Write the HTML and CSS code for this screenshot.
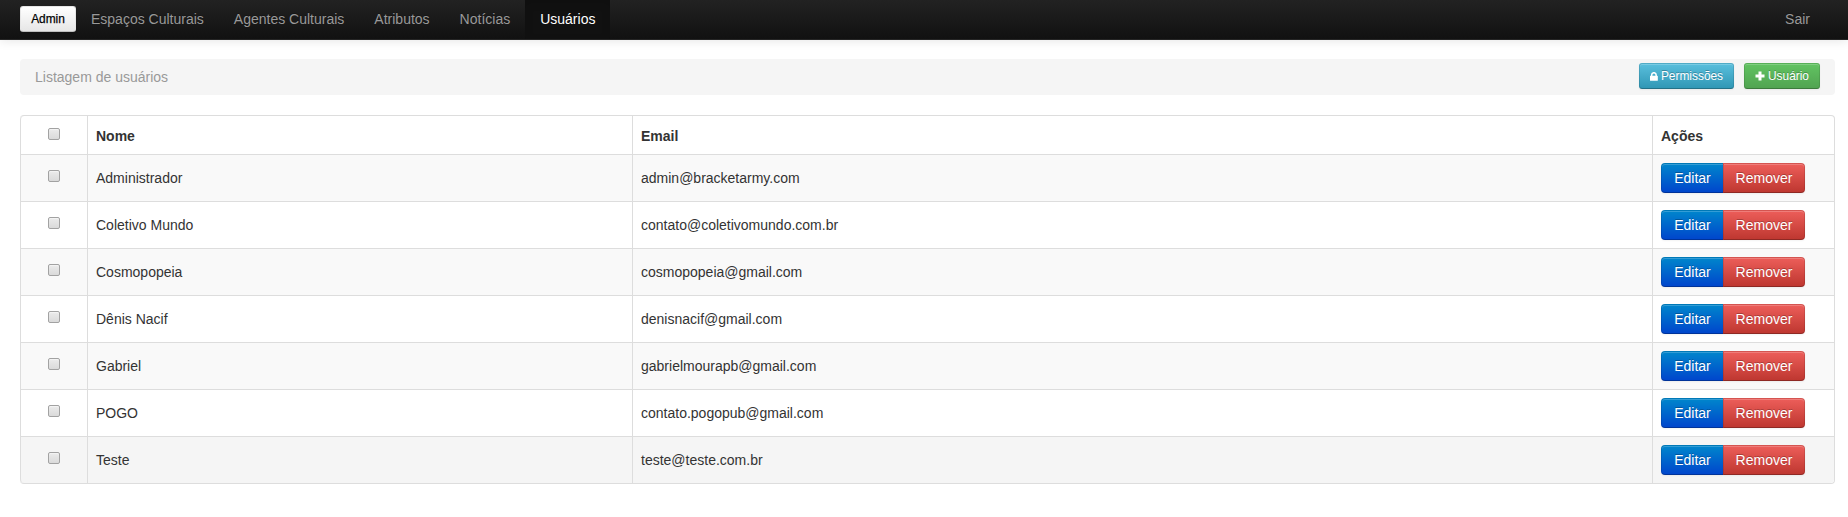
FILE: index.html
```html
<!DOCTYPE html>
<html lang="pt-BR">
<head>
<meta charset="utf-8">
<title>Listagem de usuários</title>
<link rel="stylesheet" href="styles.css">
</head>
<body>
<nav class="navbar">
  <a class="brand btn btn-small">Admin</a>
  <ul class="nav">
    <li><a>Espaços Culturais</a></li>
    <li><a>Agentes Culturais</a></li>
    <li><a>Atributos</a></li>
    <li><a>Notícias</a></li>
    <li class="active"><a>Usuários</a></li>
  </ul>
  <ul class="nav nav-right"><li><a>Sair</a></li></ul>
</nav>
<main class="container">
  <header class="breadcrumb">
    <span>Listagem de usuários</span>
    <div class="toolbar">
      <a class="btn btn-small btn-info"><svg class="icon" viewBox="0 0 9 10" width="8" height="9"><path d="M1 4.2V3.3a3.4 3.4 0 0 1 6.8 0v.9h.4q.6 0 .6.6v4.4q0 .6-.6.6H.6Q0 9.800 0 9.200V4.800q0-.6.6-.6zM2.700 4.200h3.400V3.300a1.700 1.700 0 0 0-3.400 0z"/></svg><span>Permissões</span></a>
      <a class="btn btn-small btn-success"><svg class="icon" viewBox="0 0 10 10" width="10" height="10"><path d="M3.500 .5h3v3h3v3h-3v3h-3v-3h-3v-3h3z"/></svg><span>Usuário</span></a>
    </div>
  </header>
  <table class="table">
    <colgroup><col class="c-check"><col class="c-name"><col class="c-mail"><col class="c-act"></colgroup>
    <thead><tr><th class="check"><input type="checkbox"></th><th>Nome</th><th>Email</th><th>Ações</th></tr></thead>
    <tbody>
      <tr><td class="check"><input type="checkbox"></td><td>Administrador</td><td>admin@bracketarmy.com</td><td><div class="group"><a class="btn btn-primary">Editar</a><a class="btn btn-danger">Remover</a></div></td></tr>
      <tr><td class="check"><input type="checkbox"></td><td>Coletivo Mundo</td><td>contato@coletivomundo.com.br</td><td><div class="group"><a class="btn btn-primary">Editar</a><a class="btn btn-danger">Remover</a></div></td></tr>
      <tr><td class="check"><input type="checkbox"></td><td>Cosmopopeia</td><td>cosmopopeia@gmail.com</td><td><div class="group"><a class="btn btn-primary">Editar</a><a class="btn btn-danger">Remover</a></div></td></tr>
      <tr><td class="check"><input type="checkbox"></td><td>Dênis Nacif</td><td>denisnacif@gmail.com</td><td><div class="group"><a class="btn btn-primary">Editar</a><a class="btn btn-danger">Remover</a></div></td></tr>
      <tr><td class="check"><input type="checkbox"></td><td>Gabriel</td><td>gabrielmourapb@gmail.com</td><td><div class="group"><a class="btn btn-primary">Editar</a><a class="btn btn-danger">Remover</a></div></td></tr>
      <tr><td class="check"><input type="checkbox"></td><td>POGO</td><td>contato.pogopub@gmail.com</td><td><div class="group"><a class="btn btn-primary">Editar</a><a class="btn btn-danger">Remover</a></div></td></tr>
      <tr class="current"><td class="check"><input type="checkbox"></td><td>Teste</td><td>teste@teste.com.br</td><td><div class="group"><a class="btn btn-primary">Editar</a><a class="btn btn-danger">Remover</a></div></td></tr>
    </tbody>
  </table>
</main>
</body>
</html>
```
FILE: styles.css
```css
* { box-sizing: border-box; }
body {
  margin: 0;
  background: #fff;
  color: #333;
  font: 14px/20px "Liberation Sans", Arial, sans-serif;
}
.navbar {
  display: flex;
  align-items: flex-start;
  height: 40px;
  padding: 0 23px 0 20px;
  background: linear-gradient(#222, #111);
  border-bottom: 1px solid #252525;
  box-shadow: 0 1px 10px rgba(0, 0, 0, .1);
}
.nav {
  display: flex;
  list-style: none;
  margin: 0;
  padding: 0;
}
.nav a {
  display: block;
  height: 39px;
  padding: 9px 15px;
  color: #999;
  text-shadow: 0 -1px 0 rgba(0, 0, 0, .25);
}
.nav .active a {
  background: #111;
  color: #fff;
  box-shadow: inset 0 3px 8px rgba(0, 0, 0, .125);
}
.nav-right { margin-left: auto; }
.btn {
  display: inline-flex;
  align-items: center;
  justify-content: center;
  height: 30px;
  border: 1px solid;
  border-radius: 4px;
  color: #fff;
  text-shadow: 0 -1px 0 rgba(0, 0, 0, .25);
  box-shadow: inset 0 1px 0 rgba(255, 255, 255, .2), 0 1px 2px rgba(0, 0, 0, .05);
}
.btn-small {
  height: 26px;
  border-radius: 3px;
  font-size: 11.9px;
}
.brand {
  width: 56px;
  margin-top: 6px;
  background: linear-gradient(#fff, #e6e6e6);
  border-color: #e6e6e6 #e6e6e6 #bfbfbf;
  color: #000;
  -webkit-text-stroke: .25px #000;
  text-shadow: 0 1px 1px rgba(255, 255, 255, .75);
}
.container { padding: 19px 13px 0 20px; }
.breadcrumb {
  display: flex;
  justify-content: space-between;
  height: 36px;
  margin-bottom: 20px;
  padding: 4px 15px 0;
  border-radius: 4px;
  background: #f5f5f5;
  color: #999;
}
.breadcrumb > span { padding-top: 4px; }
.toolbar { display: flex; gap: 10px; }
.icon { fill: #fff; margin-right: 4px; }
.btn-info {
  width: 95px;
  background: linear-gradient(#5bc0de, #2f96b4) border-box;
  border-color: rgba(0, 0, 0, .1) rgba(0, 0, 0, .1) rgba(0, 0, 0, .25);
}
.btn-info .icon { margin-right: 3px; }
.btn-success {
  width: 76px;
  background: linear-gradient(#62c462, #51a351) border-box;
  border-color: rgba(0, 0, 0, .1) rgba(0, 0, 0, .1) rgba(0, 0, 0, .25);
}
.btn-success .icon { margin-right: 3px; }
.table {
  width: 100%;
  table-layout: fixed;
  border: 1px solid #ddd;
  border-left: 0;
  border-radius: 4px;
  border-collapse: separate;
  border-spacing: 0;
}
.c-check { width: 67px; }
.c-name { width: 545px; }
.c-act { width: 182px; }
th, td {
  padding: 8px;
  border-left: 1px solid #ddd;
  text-align: left;
}
th { height: 38px; vertical-align: bottom; }
td { height: 47px; border-top: 1px solid #ddd; vertical-align: middle; }
.check { vertical-align: top; text-align: center; }
tbody tr:nth-child(odd) td { background: #f9f9f9; }
tbody tr.current td { background: #f5f5f5; }
th:first-child { border-top-left-radius: 4px; }
.current td:first-child { border-bottom-left-radius: 4px; }
.current td:last-child { border-bottom-right-radius: 4px; }
input {
  appearance: none;
  display: block;
  width: 12px;
  height: 12px;
  margin: 4px auto 0;
  border: 1px solid #a2a2a2;
  border-radius: 2px;
  background: linear-gradient(#ebebeb, #dadada);
  box-shadow: inset 0 1px 1px rgba(255, 255, 255, .5);
}
td input { margin-top: 7px; }
.group { display: flex; }
.btn-primary {
  width: 62px;
  border-color: rgba(0, 0, 0, .1) rgba(0, 0, 0, .1) rgba(0, 0, 0, .25);
  border-right: 0;
  border-radius: 4px 0 0 4px;
  background: linear-gradient(#08c, #04c) border-box;
}
.btn-danger {
  width: 82px;
  border-color: rgba(0, 0, 0, .1) rgba(0, 0, 0, .1) rgba(0, 0, 0, .25);
  border-radius: 0 4px 4px 0;
  background: linear-gradient(#ee5f5b, #bd362f) border-box;
}
```
